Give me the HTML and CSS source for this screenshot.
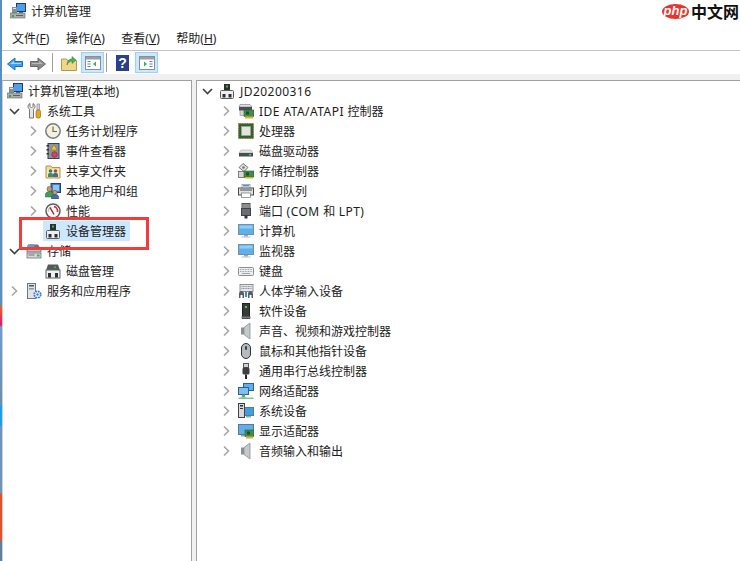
FILE: index.html
```html
<!DOCTYPE html>
<html lang="zh-CN">
<head>
<meta charset="utf-8">
<title>计算机管理</title>
<link rel="stylesheet" href="styles.css">
</head>
<body>
<svg class="defs" aria-hidden="true">
  <symbol id="c-r" viewBox="0 0 11 20"><path d="M3 5.500l4.500 4.500L3 14.500" fill="none" stroke="#a6a6a6" stroke-width="1.600"/></symbol>
  <symbol id="c-d" viewBox="0 0 11 20"><path d="M1 8l4.500 4.500L10 8" fill="none" stroke="#404040" stroke-width="1.600"/></symbol>
  <symbol id="mgmt" viewBox="0 0 16 16"><rect x="6" y="0" width="10" height="9" fill="#1d3c73"/><rect x="7" y="1" width="8" height="7" fill="#4f9fe8"/><rect x="2" y="4" width="5" height="6" fill="#7f8f9c"/><rect x="3" y="5" width="3" height="1" fill="#d8e0e6"/><rect x="9" y="9" width="4" height="2" fill="#5d6b78"/><rect x="0" y="10" width="15" height="5" fill="#a9b0a8" stroke="#5f6a60" stroke-width=".6"/><rect x="2" y="12" width="2" height="2" fill="#3aa14a"/><rect x="6" y="12" width="7" height="1" fill="#59625b"/></symbol>
  <symbol id="tools" viewBox="0 0 16 16"><path d="M4 0.500v3l1.500 1.500L7 3.500v-3c1.500.8 2 2 2 3.200 0 1.200-.7 2-1.500 2.600V15H3.500V6.300C2.700 5.700 2 4.900 2 3.700 2 2.500 2.500 1.300 4 0.500z" fill="#e6e6e6" stroke="#686868" stroke-width=".9"/><rect x="11" y="1" width="2.500" height="6" fill="#d8d8d8" stroke="#777" stroke-width=".6"/><rect x="10" y="7" width="4.500" height="8" rx="1.500" fill="#e8a814" stroke="#8a6208" stroke-width=".6"/></symbol>
  <symbol id="clock" viewBox="0 0 16 16"><circle cx="8" cy="8" r="7.200" fill="#f6f1dc" stroke="#747b84" stroke-width="1.500"/><path d="M8 3.500V8.500H12" fill="none" stroke="#6d6a5c" stroke-width="1.200"/></symbol>
  <symbol id="event" viewBox="0 0 16 16"><rect x="3" y="0.500" width="11" height="15" fill="#8c94a3" stroke="#3a4354"/><rect x="1.500" y="2" width="2.500" height="1.500" fill="#333"/><rect x="1.500" y="6" width="2.500" height="1.500" fill="#333"/><rect x="1.500" y="10" width="2.500" height="1.500" fill="#333"/><path d="M9 1.500l3 5.500H6z" fill="#f5c825" stroke="#8a6c08" stroke-width=".5"/><circle cx="9.500" cy="11.500" r="2.800" fill="#d8445a" stroke="#7c1c2c" stroke-width=".6"/></symbol>
  <symbol id="shared" viewBox="0 0 16 16"><path d="M1 3h5l1 1.500h8V15H1z" fill="#f3d98c" stroke="#b8964a"/><rect x="2" y="6" width="12" height="8" fill="#fae9b2"/><circle cx="5.500" cy="8" r="1.800" fill="#3f6f8f"/><path d="M3 14v-2.500c0-1 1-1.500 2.500-1.500S8 10.500 8 11.500V14z" fill="#3a8f6a"/><circle cx="10.500" cy="8" r="1.800" fill="#8a5a3a"/><path d="M8 14v-2.500c0-1 1-1.500 2.500-1.500s2.500.5 2.500 1.500V14z" fill="#3a6aaf"/></symbol>
  <symbol id="users" viewBox="0 0 16 16"><rect x="6" y="0.500" width="9.500" height="9" fill="#3f7fd0" stroke="#24406f"/><rect x="8" y="2" width="6" height="6" fill="#8cc4f4"/><circle cx="4.500" cy="6" r="2.500" fill="#c79a6c" stroke="#5e4128" stroke-width=".5"/><path d="M0.500 14v-3c0-1.500 2-2.500 4-2.500s4 1 4 2.500v3z" fill="#4b9a5d" stroke="#2b5c36" stroke-width=".5"/><circle cx="10" cy="9.500" r="2.200" fill="#c79a6c" stroke="#5e4128" stroke-width=".5"/><path d="M6.500 16v-2.500c0-1.200 1.500-2 3.500-2s3.500.8 3.500 2V16z" fill="#3f6fb0" stroke="#28456f" stroke-width=".5"/></symbol>
  <symbol id="perf" viewBox="0 0 16 16"><circle cx="8" cy="8" r="7" fill="#fbfbfb" stroke="#5c5c5c" stroke-width="1.500"/><path d="M3.500 9a4.500 4.500 0 0 1 3-5" fill="none" stroke="#c8c8c8" stroke-width="1.500"/><path d="M9 3.700a4.500 4.500 0 0 1 3.500 5.300" fill="none" stroke="#d8323a" stroke-width="1.800"/><path d="M5 4.500l4 7" stroke="#b02028" stroke-width="1.500"/></symbol>
  <symbol id="dev" viewBox="0 0 16 16"><rect x="5" y="1" width="6" height="7" fill="#2f2f2f"/><rect x="7" y="2.500" width="2" height="2" fill="#35c04a"/><rect x="1.500" y="7.500" width="13" height="8" rx="1" fill="#eceff2" stroke="#5c5c5c"/><rect x="3.500" y="11" width="3" height="3.500" fill="#2f2f2f"/><rect x="9.500" y="11" width="3" height="3.500" fill="#2f2f2f"/></symbol>
  <symbol id="storage" viewBox="0 0 16 16"><path d="M2 1.500h10l2 3H1z" fill="#6e7378"/><ellipse cx="5" cy="3" rx="3.500" ry="2" fill="#5aa0d8"/><rect x="1" y="5" width="14" height="4" fill="#b9c1c6" stroke="#5b6368" stroke-width=".7"/><rect x="1" y="10" width="14" height="5" fill="#d4d9dc" stroke="#5b6368" stroke-width=".7"/><rect x="11" y="11.500" width="2.500" height="2" fill="#35b04a"/><rect x="2.500" y="11.500" width="6" height="1" fill="#6a7276"/></symbol>
  <symbol id="disk" viewBox="0 0 16 16"><path d="M3 1.500h10l2 6H1z" fill="#55595c"/><rect x="9" y="3.500" width="2" height="1.500" fill="#35c04a"/><rect x="1" y="7" width="14" height="8" fill="#eef0f1" stroke="#606468"/><rect x="3" y="10" width="3" height="4.500" fill="#2f2f2f"/><rect x="10" y="10" width="3" height="4.500" fill="#2f2f2f"/></symbol>
  <symbol id="svc" viewBox="0 0 16 16"><rect x="1.500" y="0.500" width="8" height="15" fill="#dfe4e8" stroke="#6d7780"/><rect x="3" y="2" width="5" height="1.500" fill="#4a5560"/><rect x="3" y="5" width="5" height="1.500" fill="#8b96a0"/><circle cx="11.500" cy="11.500" r="3.200" fill="#fff" stroke="#3f7fc8" stroke-width="1.800" stroke-dasharray="1.800 .7"/><circle cx="11.500" cy="11.500" r="1.200" fill="#3f7fc8"/></symbol>
  <symbol id="ide" viewBox="0 0 16 16"><path d="M2 1.500h10l2 2.500H1z" fill="#e2e2e2" stroke="#777" stroke-width=".6"/><rect x="1" y="4" width="13" height="3.500" fill="#4c5054"/><rect x="2" y="7.500" width="5" height="5" fill="#d4d6d8" stroke="#777" stroke-width=".5"/><rect x="6" y="7" width="10" height="6.500" fill="#3f8f4a" stroke="#25612f" stroke-width=".6"/><rect x="8" y="8.500" width="3" height="3" fill="#1f4f2a"/><rect x="7" y="13.500" width="8" height="2" fill="#e0b030"/></symbol>
  <symbol id="cpu" viewBox="0 0 16 16"><rect x="0.500" y="0.500" width="15" height="15" fill="#3d6a3a" stroke="#8c7a30" stroke-dasharray="1 .7"/><rect x="1.500" y="1.500" width="13" height="13" fill="#335d32"/><rect x="3.500" y="3.500" width="9" height="9" fill="#e4e4dc" stroke="#a8a89c" stroke-width=".6"/></symbol>
  <symbol id="drive" viewBox="0 0 16 16"><path d="M3 7h10l2 3H1z" fill="#e4e4e4" stroke="#9a9a9a" stroke-width=".5"/><rect x="1" y="10" width="14" height="3.500" fill="#4a4d50"/><rect x="11" y="11" width="2" height="1.500" fill="#44d060"/></symbol>
  <symbol id="storctl" viewBox="0 0 16 16"><path d="M5 0.500l5 4-4 4-5-4z" fill="#e2e2e2" stroke="#555" stroke-width=".8"/><circle cx="5.500" cy="4.500" r="1.300" fill="#777"/><rect x="0.500" y="8.500" width="7" height="6" fill="#d8d8d8" stroke="#555" stroke-width=".7"/><rect x="6" y="8" width="10" height="6" fill="#3f8f4a" stroke="#25612f" stroke-width=".6"/><rect x="8" y="9.500" width="3" height="3" fill="#1f4f2a"/><rect x="7" y="14" width="8" height="1.500" fill="#e0b030"/></symbol>
  <symbol id="printer" viewBox="0 0 16 16"><rect x="4" y="1.500" width="8" height="4" fill="#fff" stroke="#8a8a8a" stroke-width=".7"/><rect x="5" y="2" width="6" height="1.500" fill="#3f9ad8"/><rect x="0.500" y="5" width="15" height="7" fill="#dfe0e2" stroke="#4a4a4a"/><rect x="2" y="6.500" width="12" height="1" fill="#4a4a4a"/><rect x="3.500" y="10" width="9" height="4.500" fill="#fff" stroke="#777" stroke-width=".7"/></symbol>
  <symbol id="port" viewBox="0 0 16 16"><rect x="4" y="0.500" width="8" height="5" fill="#a9adb0" stroke="#4e5256"/><path d="M5.500 2h1M7.500 2h1M9.500 2h1M5.500 4h1M7.500 4h1M9.500 4h1" stroke="#333"/><rect x="3.500" y="5.500" width="9" height="7" fill="#6a6e72" stroke="#3f4246"/><rect x="6.500" y="12.500" width="3" height="3" fill="#2f3236"/></symbol>
  <symbol id="mon" viewBox="0 0 16 16"><rect x="0.500" y="1.500" width="15" height="10" fill="#5eb0ec" stroke="#7a8e9f"/><rect x="1.500" y="2.500" width="13" height="3" fill="#8fcdf6"/><rect x="6" y="12" width="4" height="1.500" fill="#9aa5ae"/><rect x="3.500" y="13.500" width="9" height="1" fill="#b8c0c6"/></symbol>
  <symbol id="kbd" viewBox="0 0 16 16"><rect x="0.500" y="4.500" width="15" height="8" rx="1" fill="#eceef0" stroke="#8a8e92"/><path d="M2 6.500h12M2 8.500h12" stroke="#a0a4a8" stroke-dasharray="1 .6"/><path d="M4 10.500h8" stroke="#a0a4a8"/></symbol>
  <symbol id="hid" viewBox="0 0 16 16"><rect x="2" y="1.500" width="13" height="7" fill="#e4e6e8" stroke="#777b80" stroke-width=".8"/><path d="M3.500 3.500h10M3.500 5.500h10" stroke="#8a8e92" stroke-dasharray="1 .6"/><path d="M1 15v-4c0-2 1-3 2.500-3S6 9 6 11v4H4.500v-3h-2v3z" fill="#5a5e62"/><path d="M10 15v-4c0-2 1-3 2.500-3S15 9 15 11v4h-1.500v-3h-2v3z" fill="#5a5e62"/><rect x="7" y="8" width="2" height="6" fill="#3f8fd0"/></symbol>
  <symbol id="soft" viewBox="0 0 16 16"><rect x="4.500" y="0.500" width="7" height="15" fill="#3a3a3a" stroke="#222"/><rect x="7" y="3" width="2" height="2" fill="#3fd05a"/><rect x="3.500" y="13.500" width="9" height="2" fill="#777"/></symbol>
  <symbol id="spk" viewBox="0 0 16 16"><rect x="3" y="4.500" width="3" height="7" fill="#8a9094"/><path d="M6 4.500l6-4.500v16l-6-4.500z" fill="#c4c9cc" stroke="#8a9094" stroke-width=".8"/></symbol>
  <symbol id="mouse" viewBox="0 0 16 16"><rect x="3.500" y="0.500" width="9" height="15" rx="4.500" fill="#b4bac0" stroke="#2f3338"/><rect x="7" y="3" width="2" height="4" rx="1" fill="#3f4348"/></symbol>
  <symbol id="usb" viewBox="0 0 16 16"><rect x="5.500" y="0.500" width="5" height="4" fill="#d0d2d4" stroke="#555"/><rect x="4.500" y="4.500" width="7" height="7" rx="1.500" fill="#3c3f42"/><rect x="7" y="11.500" width="2" height="4.500" fill="#222"/></symbol>
  <symbol id="net" viewBox="0 0 16 16"><rect x="5.500" y="0.500" width="10" height="7" fill="#5eb0ec" stroke="#2f5f9a"/><rect x="0.500" y="4.500" width="10" height="7" fill="#7cc0f0" stroke="#2f5f9a"/><rect x="4" y="11.500" width="3" height="1.500" fill="#7a8a9a"/><path d="M5.500 12.500l3 2h-6z" fill="#3fb04f"/><rect x="0.500" y="14.500" width="15" height="1.500" fill="#7cc88a"/></symbol>
  <symbol id="sys" viewBox="0 0 16 16"><rect x="5" y="4.500" width="10.500" height="8" fill="#3f9fe4" stroke="#5a7a94"/><rect x="8" y="13" width="5" height="1.500" fill="#9aa5ae"/><rect x="0.500" y="0.500" width="6" height="14" fill="#d8dadc" stroke="#3f4246"/><rect x="2" y="2" width="3" height="1.500" fill="#2f3236"/><rect x="2" y="5" width="3" height="1" fill="#2f3236"/></symbol>
  <symbol id="disp" viewBox="0 0 16 16"><rect x="0.500" y="1.500" width="15" height="10" fill="#5eb0ec" stroke="#5a7a94"/><rect x="3" y="12" width="5" height="1.500" fill="#9aa5ae"/><rect x="7" y="7" width="9" height="6.500" fill="#3f8f4a" stroke="#25612f" stroke-width=".6"/><rect x="9" y="8.500" width="3" height="3" fill="#1f4f2a"/><rect x="8" y="13.500" width="7" height="2" fill="#e0b030"/></symbol>
  <symbol id="back" viewBox="0 -1 16 16"><path d="M0.500 8L8 2v3.500h7.500v5H8V14z" fill="#3fa0f0" stroke="#1f6fb8"/><path d="M3 8l4-3v2h7v1z" fill="#a8dcfb"/></symbol>
  <symbol id="fwd" viewBox="0 -1 16 16"><path d="M15.500 8L8 2v3.500H0.500v5H8V14z" fill="#8a8a8a" stroke="#6a6a6a"/><path d="M13 8L9 5v2H2v1z" fill="#b8b8b8"/></symbol>
  <symbol id="up" viewBox="0 0 16 16"><path d="M0.500 4h5l1 1.500h9V15.500H0.500z" fill="#f0d68c" stroke="#b8964a"/><path d="M6 10c0-4 2-6 5-6V1.500L15 5l-4 3.500V6C9 6 7 7.500 6 10z" fill="#4cb050" stroke="#2b7a30" stroke-width=".5"/></symbol>
  <symbol id="pane-l" viewBox="0 0 16 16"><rect x="0.500" y="1.500" width="15" height="13" fill="#fff" stroke="#8a8f94"/><rect x="1" y="2" width="14" height="2.500" fill="#9aa0a6"/><path d="M2.500 6.500h3M2.500 9h3M2.500 11.500h3" stroke="#4a7fc0"/><path d="M11 6.500v5L8 9z" fill="#3fb04f"/></symbol>
  <symbol id="pane-r" viewBox="0 0 16 16"><rect x="0.500" y="1.500" width="15" height="13" fill="#fff" stroke="#8a8f94"/><rect x="1" y="2" width="14" height="2.500" fill="#9aa0a6"/><path d="M10.500 6.500h3M10.500 9h3M10.500 11.500h3" stroke="#4a7fc0"/><path d="M5 6.500v5L8 9z" fill="#3fb04f"/></symbol>
</svg>

<div class="app">
  <div class="edge"></div>
  <div class="window">
    <header class="titlebar">
      <svg class="ic"><use href="#mgmt"/></svg>
      <span>计算机管理</span>
    </header>
    <nav class="menubar">
      <span>文件(<u>F</u>)</span>
      <span>操作(<u>A</u>)</span>
      <span>查看(<u>V</u>)</span>
      <span>帮助(<u>H</u>)</span>
    </nav>
    <div class="toolbar">
      <svg class="ic t-back"><use href="#back"/></svg>
      <svg class="ic t-fwd"><use href="#fwd"/></svg>
      <i class="sep"></i>
      <svg class="ic t-up"><use href="#up"/></svg>
      <span class="tbtn t-b1"><svg class="ic"><use href="#pane-l"/></svg></span>
      <i class="sep t-s2"></i>
      <span class="help">?</span>
      <span class="tbtn t-b2"><svg class="ic"><use href="#pane-r"/></svg></span>
    </div>
    <main class="panes">
      <section class="pane left">
        <div class="row root"><svg class="ic"><use href="#mgmt"/></svg><span>计算机管理(本地)</span></div>
        <div class="row l1"><svg class="chev"><use href="#c-d"/></svg><svg class="ic"><use href="#tools"/></svg><span>系统工具</span></div>
        <div class="row l2"><svg class="chev"><use href="#c-r"/></svg><svg class="ic"><use href="#clock"/></svg><span>任务计划程序</span></div>
        <div class="row l2"><svg class="chev"><use href="#c-r"/></svg><svg class="ic"><use href="#event"/></svg><span>事件查看器</span></div>
        <div class="row l2"><svg class="chev"><use href="#c-r"/></svg><svg class="ic"><use href="#shared"/></svg><span>共享文件夹</span></div>
        <div class="row l2"><svg class="chev"><use href="#c-r"/></svg><svg class="ic"><use href="#users"/></svg><span>本地用户和组</span></div>
        <div class="row l2"><svg class="chev"><use href="#c-r"/></svg><svg class="ic"><use href="#perf"/></svg><span>性能</span></div>
        <div class="row l2"><i class="chev"></i><div class="selected"><svg class="ic"><use href="#dev"/></svg><span>设备管理器</span></div></div>
        <div class="row l1"><svg class="chev"><use href="#c-d"/></svg><svg class="ic"><use href="#storage"/></svg><span>存储</span></div>
        <div class="row l2"><i class="chev"></i><svg class="ic"><use href="#disk"/></svg><span>磁盘管理</span></div>
        <div class="row l1"><svg class="chev"><use href="#c-r"/></svg><svg class="ic"><use href="#svc"/></svg><span>服务和应用程序</span></div>
      </section>
      <section class="pane right">
        <div class="row rroot"><svg class="chev"><use href="#c-d"/></svg><svg class="ic"><use href="#dev"/></svg><span><span class="lat">JD20200316</span></span></div>
        <div class="row rchild"><svg class="chev"><use href="#c-r"/></svg><svg class="ic"><use href="#ide"/></svg><span><span class="lat">IDE ATA/ATAPI </span>控制器</span></div>
        <div class="row rchild"><svg class="chev"><use href="#c-r"/></svg><svg class="ic"><use href="#cpu"/></svg><span>处理器</span></div>
        <div class="row rchild"><svg class="chev"><use href="#c-r"/></svg><svg class="ic"><use href="#drive"/></svg><span>磁盘驱动器</span></div>
        <div class="row rchild"><svg class="chev"><use href="#c-r"/></svg><svg class="ic"><use href="#storctl"/></svg><span>存储控制器</span></div>
        <div class="row rchild"><svg class="chev"><use href="#c-r"/></svg><svg class="ic"><use href="#printer"/></svg><span>打印队列</span></div>
        <div class="row rchild"><svg class="chev"><use href="#c-r"/></svg><svg class="ic"><use href="#port"/></svg><span>端口<span class="lat"> (COM </span>和<span class="lat"> LPT)</span></span></div>
        <div class="row rchild"><svg class="chev"><use href="#c-r"/></svg><svg class="ic"><use href="#mon"/></svg><span>计算机</span></div>
        <div class="row rchild"><svg class="chev"><use href="#c-r"/></svg><svg class="ic"><use href="#mon"/></svg><span>监视器</span></div>
        <div class="row rchild"><svg class="chev"><use href="#c-r"/></svg><svg class="ic"><use href="#kbd"/></svg><span>键盘</span></div>
        <div class="row rchild"><svg class="chev"><use href="#c-r"/></svg><svg class="ic"><use href="#hid"/></svg><span>人体学输入设备</span></div>
        <div class="row rchild"><svg class="chev"><use href="#c-r"/></svg><svg class="ic"><use href="#soft"/></svg><span>软件设备</span></div>
        <div class="row rchild"><svg class="chev"><use href="#c-r"/></svg><svg class="ic"><use href="#spk"/></svg><span>声音、视频和游戏控制器</span></div>
        <div class="row rchild"><svg class="chev"><use href="#c-r"/></svg><svg class="ic"><use href="#mouse"/></svg><span>鼠标和其他指针设备</span></div>
        <div class="row rchild"><svg class="chev"><use href="#c-r"/></svg><svg class="ic"><use href="#usb"/></svg><span>通用串行总线控制器</span></div>
        <div class="row rchild"><svg class="chev"><use href="#c-r"/></svg><svg class="ic"><use href="#net"/></svg><span>网络适配器</span></div>
        <div class="row rchild"><svg class="chev"><use href="#c-r"/></svg><svg class="ic"><use href="#sys"/></svg><span>系统设备</span></div>
        <div class="row rchild"><svg class="chev"><use href="#c-r"/></svg><svg class="ic"><use href="#disp"/></svg><span>显示适配器</span></div>
        <div class="row rchild"><svg class="chev"><use href="#c-r"/></svg><svg class="ic"><use href="#spk"/></svg><span>音频输入和输出</span></div>
      </section>
    </main>
  </div>
</div>
<div class="callout"></div>
<div class="watermark"><span class="php">php</span><span class="cn">中文网</span></div>
</body>
</html>
```

FILE: styles.css
```css
* { box-sizing: border-box; }
html, body { margin: 0; height: 100%; }
body {
  width: 740px;
  height: 561px;
  overflow: hidden;
  position: relative;
  background: #fff;
  color: #1c1c1c;
  font: 12px/20px "Noto Sans", "Noto Sans CJK SC", sans-serif;
}
.defs { position: absolute; width: 0; height: 0; }
.ic { width: 16px; height: 16px; flex: none; display: block; }
.chev { width: 11px; height: 20px; flex: none; display: block; margin-right: 6px; }
.lat { letter-spacing: .45px; white-space: pre; }

.app { display: flex; height: 561px; }
.edge {
  width: 2px;
  flex: none;
  background: linear-gradient(#5b8fbe 0 305px, #e8602c 307px, #e0186c 325px, #6f9cd0 327px, #6d8ea8 405px, #1e9ee8 406px 425px, #6f94b8 427px 493px, #e0502a 494px 540px, #5f7f9a 541px);
}
.window { flex: 1; min-width: 0; display: flex; flex-direction: column; }

.titlebar { height: 26px; display: flex; align-items: center; gap: 5px; padding: 0 0 4px 8px; }
.menubar { height: 25px; display: flex; align-items: center; gap: 16.500px; padding: 0 0 1px 10px; border-bottom: 1px solid #c4c4c4; }
.titlebar > span, .menubar > span, .row > span, .selected > span { padding-top: 2px; }

.toolbar { height: 23px; display: flex; align-items: center; padding-left: 5px; }
.t-fwd { margin-left: 7px; }
.sep { width: 1px; height: 19px; background: #a0a0a0; margin-left: 6px; }
.t-up { margin-left: 8px; }
.tbtn {
  width: 23px;
  height: 21px;
  display: flex;
  align-items: center;
  justify-content: center;
  background: #cce8ff;
  border: 1px solid #99d1ff;
}
.t-b1 { margin-left: 4px; }
.t-s2 { margin-left: 2px; }
.help {
  width: 13px;
  height: 16px;
  margin-left: 9px;
  background: #27408f;
  color: #fff;
  font: bold 14px/16px "Liberation Sans", sans-serif;
  text-align: center;
}
.t-b2 { margin-left: 6px; }

.panes { flex: 1; min-height: 0; display: flex; background: #f0f0f0; padding-top: 6px; gap: 4px; }
.pane { background: #fff; border: 1px solid #a0a0a0; border-bottom: 0; }
.left { width: 190px; flex: none; border-left-color: #d0d0d0; }
.right { flex: 1; border-right: 0; }

.row { height: 20px; display: flex; align-items: center; white-space: nowrap; }
.row > .ic { margin-right: 5px; }
.row.root { padding-left: 4px; }
.row.l1 { padding-left: 6px; }
.row.l2 { padding-left: 25px; }
.row.rroot { padding-left: 5px; }
.row.rchild { padding-left: 24px; }
.selected {
  height: 20px;
  display: flex;
  align-items: center;
  gap: 5px;
  margin-left: -2px;
  padding: 0 4px 0 2px;
  background: #cce8ff;
}

.callout {
  position: absolute;
  left: 19px;
  top: 217px;
  width: 130px;
  height: 33px;
  border: 3px solid #f03c3c;
}

.watermark { position: absolute; left: 662px; top: 3px; display: flex; align-items: center; gap: 2px; }
.php {
  width: 27px;
  height: 15px;
  border-radius: 50%;
  background: #e8342c;
  color: #fff;
  font: italic bold 13px/14px "Liberation Sans", sans-serif;
  text-align: center;
}
.cn { font: bold 16px/16px "Noto Sans CJK SC", sans-serif; color: #111; }
```
